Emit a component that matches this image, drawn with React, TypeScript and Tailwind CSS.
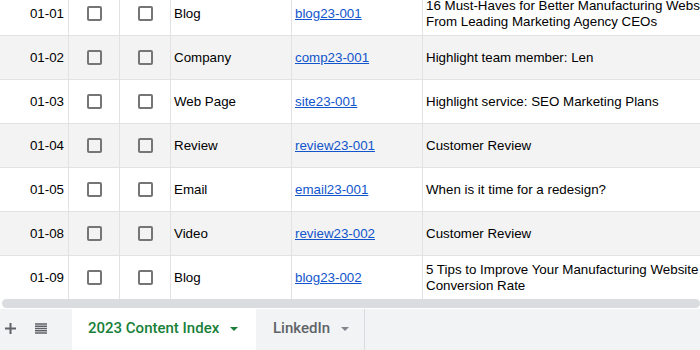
import { Fragment } from "react"

const rows = [
    { date: "01-01", type: "Blog", code: "blog23-001", title: ["16 Must-Haves for Better Manufacturing Websites", "From Leading Marketing Agency CEOs"] },
    { date: "01-02", type: "Company", code: "comp23-001", title: ["Highlight team member: Len"] },
    { date: "01-03", type: "Web Page", code: "site23-001", title: ["Highlight service: SEO Marketing Plans"] },
    { date: "01-04", type: "Review", code: "review23-001", title: ["Customer Review"] },
    { date: "01-05", type: "Email", code: "email23-001", title: ["When is it time for a redesign?"] },
    { date: "01-08", type: "Video", code: "review23-002", title: ["Customer Review"] },
    { date: "01-09", type: "Blog", code: "blog23-002", title: ["5 Tips to Improve Your Manufacturing Website", "Conversion Rate"] },
]

function Checkbox() {
    return <div className="w-[15px] h-[15px] border-2 border-[#757575] rounded-[2px]" />
}

function Caret({ className }: { className: string }) {
    return (
        <svg width="8" height="4" viewBox="0 0 8 4" className={className}>
            <path d="M0 0h8L4 4z" fill="currentColor" />
        </svg>
    )
}

export default function App() {
    return (
        <div className="w-[700px] h-[350px] overflow-hidden bg-white flex flex-col font-['Liberation_Sans',Arial,sans-serif] text-[13.33px] text-black">
            {/* sheet grid, scrolled down a little */}
            <div className="h-[299px] overflow-hidden">
                <div className="-mt-[8px] w-[760px] grid grid-cols-[69px_51px_51px_121px_131px_337px]">
                    {rows.map((r, i) => {
                        const cell = i % 2 === 1 ? "bg-[#f3f3f3]" : "bg-white"
                        return (
                            <Fragment key={r.date}>
                                <div className={`${cell} h-[44px] border-r border-b border-[#e2e2e2] flex items-center justify-end pr-[4px]`}>{r.date}</div>
                                <div className={`${cell} h-[44px] border-r border-b border-[#e2e2e2] flex items-center justify-center`}><Checkbox /></div>
                                <div className={`${cell} h-[44px] border-r border-b border-[#e2e2e2] flex items-center justify-center`}><Checkbox /></div>
                                <div className={`${cell} h-[44px] border-r border-b border-[#e2e2e2] flex items-center pl-[3px]`}>{r.type}</div>
                                <div className={`${cell} h-[44px] border-r border-b border-[#e2e2e2] flex items-center pl-[3px]`}>
                                    <span className="text-[#1155cc] underline">{r.code}</span>
                                </div>
                                <div className={`${cell} h-[44px] border-b border-[#e2e2e2] flex flex-col justify-center pl-[3px] leading-[16px] whitespace-nowrap`}>
                                    {r.title.map((t) => <span key={t}>{t}</span>)}
                                </div>
                            </Fragment>
                        )
                    })}
                </div>
            </div>

            {/* horizontal scrollbar */}
            <div className="h-[10px] bg-white pl-[2px]">
                <div className="h-[9px] rounded-full bg-[#dadce0]" />
            </div>

            {/* sheet tabs */}
            <div className="flex-1 bg-[#f1f3f4] flex font-['Roboto',Arial,sans-serif] text-[15px]">
                <div className="w-[72px] flex items-center pb-[3px] text-[#5f6368]">
                    <svg width="11" height="11" viewBox="0 0 11 11" className="ml-[5px]">
                        <path d="M5.5 0v11M0 5.5h11" stroke="currentColor" strokeWidth="2" />
                    </svg>
                    <svg width="12" height="11" viewBox="0 0 12 11" className="ml-[19px]">
                        <path d="M0 1h12M0 3.25h12M0 5.5h12M0 7.75h12M0 10h12" stroke="currentColor" strokeWidth="1.4" />
                    </svg>
                </div>
                <div className="w-[184px] bg-white flex items-center pl-[16px] pb-[2px] font-medium text-[#188038]">
                    <span>2023 Content Index</span>
                    <Caret className="ml-[11px] text-[#188038]" />
                </div>
                <div className="w-[109px] border-r border-[#dadce0] flex items-center pl-[17px] pb-[2px] font-medium text-[#5f6368]">
                    <span>LinkedIn</span>
                    <Caret className="ml-[11px] text-[#80868b]" />
                </div>
            </div>
        </div>
    )
}
